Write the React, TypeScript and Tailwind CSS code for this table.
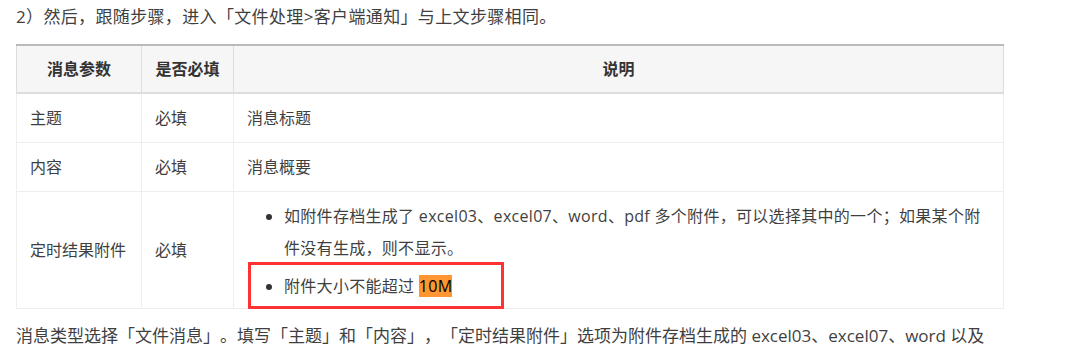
const font = "font-['Open_Sans','Noto_Sans_CJK_SC',sans-serif] [text-spacing-trim:space-all]"

const rows = [
  { name: "主题", required: "必填", desc: "消息标题" },
  { name: "内容", required: "必填", desc: "消息概要" },
]

export default function App() {
  return (
    <div className={`relative h-[346px] w-[1092px] overflow-hidden bg-white pl-4 pt-1 text-[#3f3f3f] ${font}`}>
      <div className="w-[988px]">
        <p className="text-[17px] leading-[26px] tracking-[0.35px]">2）然后，跟随步骤，进入「文件处理&gt;客户端通知」与上文步骤相同。</p>

        <table className="mt-[14px] w-[988px] table-fixed border-collapse text-[16px] leading-[32px]">
          <colgroup>
            <col className="w-[125px]" />
            <col className="w-[92px]" />
            <col />
          </colgroup>
          <thead>
            <tr className="border-t-2 border-t-[#bbbbbb] bg-[#f6f6f6]">
              <th className="border-x border-b-2 border-[#dddddd] px-[13px] py-[7px] text-center font-bold text-[#333]">消息参数</th>
              <th className="border-x border-b-2 border-[#dddddd] px-[13px] py-[7px] text-center font-bold text-[#333]">是否必填</th>
              <th className="border-x border-b-2 border-[#dddddd] px-[13px] py-[7px] text-center font-bold text-[#333]">说明</th>
            </tr>
          </thead>
          <tbody>
            {rows.map((r) => (
              <tr key={r.name}>
                <td className="border border-[#eeeeee] px-[13px] py-2">{r.name}</td>
                <td className="border border-[#eeeeee] px-[13px] py-2">{r.required}</td>
                <td className="border border-[#eeeeee] px-[13px] py-2">{r.desc}</td>
              </tr>
            ))}
            <tr>
              <td className="border border-[#eeeeee] px-[13px] py-2">定时结果附件</td>
              <td className="border border-[#eeeeee] px-[13px] py-2">必填</td>
              <td className="border border-[#eeeeee] px-[13px] pb-[6px] pt-2">
                <ul className="list-disc pl-[37px] tracking-[0.3px] marker:text-[#333]">
                  <li>如附件存档生成了 excel03、excel07、word、pdf 多个附件，可以选择其中的一个；如果某个附件没有生成，则不显示。</li>
                  <li className="mt-[6px]">
                    附件大小不能超过 <span className="bg-[#ff9632] text-black">10M</span>
                  </li>
                </ul>
              </td>
            </tr>
          </tbody>
        </table>

        <p className="mt-[14px] text-[17px] leading-[26px]">
          消息类型选择「文件消息」。填写「主题」和「内容」，「定时结果附件」选项为附件存档生成的 excel03、excel07、word 以及 pdf 多个附件。
        </p>
      </div>

      {/* annotation box */}
      <div className="absolute left-[248px] top-[262px] h-[47px] w-[256px] border-[3px] border-[#ff3333]" />
    </div>
  )
}
